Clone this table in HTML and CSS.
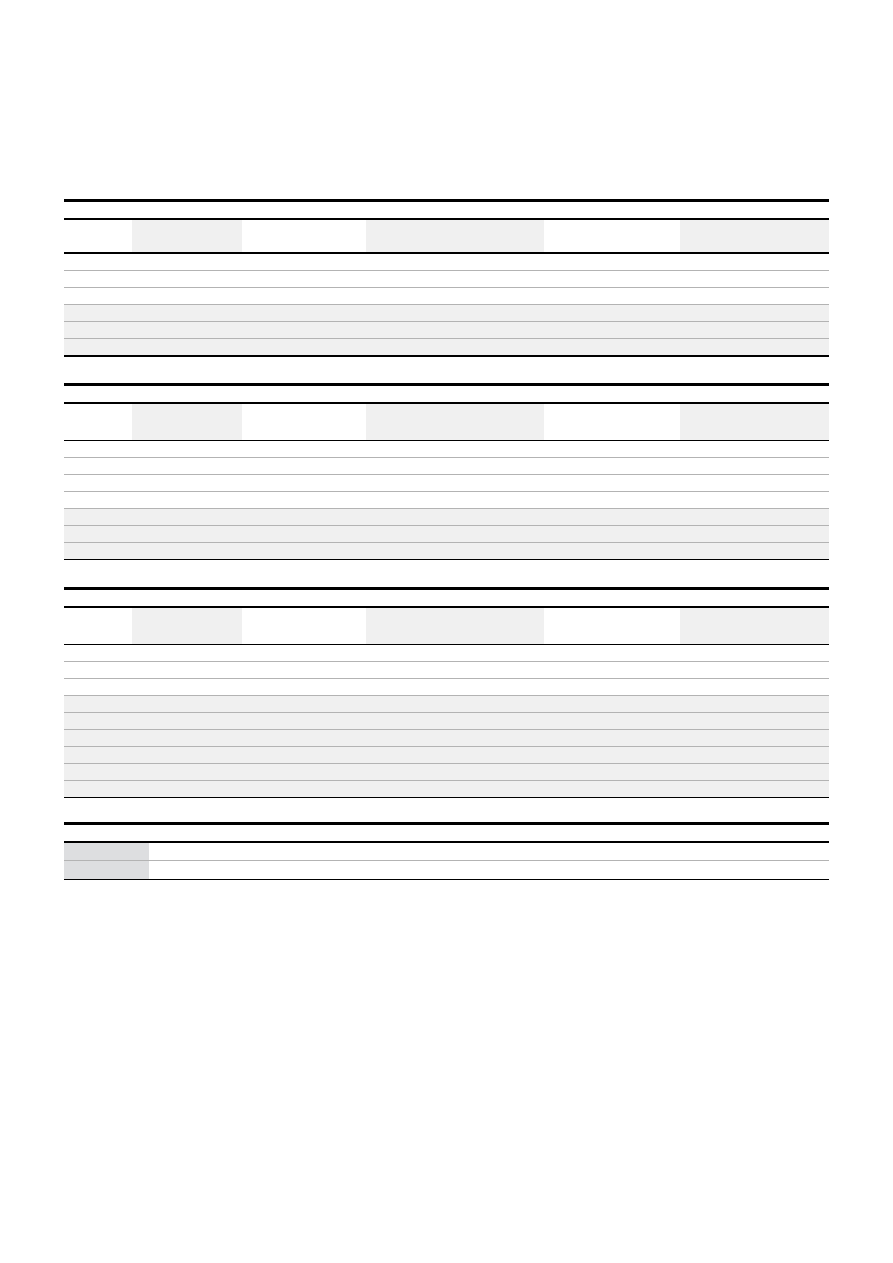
FILE: index.html
```html
<!DOCTYPE html>
<html lang="en">
<head>
<meta charset="utf-8">
<title>Tables</title>
<link rel="stylesheet" href="styles.css">
</head>
<body>
<main class="page">
  <section class="block">
    <div class="caption"></div>
    <div class="tbl tbl-first">
      <div class="head head-short">
        <div class="cell"></div><div class="cell shade"></div><div class="cell"></div>
        <div class="cell shade"></div><div class="cell"></div><div class="cell shade"></div>
      </div>
      <div class="row"></div>
      <div class="row"></div>
      <div class="row"></div>
      <div class="row shade"></div>
      <div class="row shade"></div>
      <div class="row shade"></div>
    </div>
  </section>

  <section class="block gap-b">
    <div class="caption"></div>
    <div class="tbl">
      <div class="head">
        <div class="cell"></div><div class="cell shade"></div><div class="cell"></div>
        <div class="cell shade"></div><div class="cell"></div><div class="cell shade"></div>
      </div>
      <div class="row"></div>
      <div class="row"></div>
      <div class="row"></div>
      <div class="row"></div>
      <div class="row shade"></div>
      <div class="row shade"></div>
      <div class="row shade"></div>
    </div>
  </section>

  <section class="block gap-c">
    <div class="caption"></div>
    <div class="tbl">
      <div class="head">
        <div class="cell"></div><div class="cell shade"></div><div class="cell"></div>
        <div class="cell shade"></div><div class="cell"></div><div class="cell shade"></div>
      </div>
      <div class="row"></div>
      <div class="row"></div>
      <div class="row"></div>
      <div class="row shade"></div>
      <div class="row shade"></div>
      <div class="row shade"></div>
      <div class="row shade"></div>
      <div class="row shade"></div>
      <div class="row shade"></div>
    </div>
  </section>

  <section class="block gap-d">
    <div class="caption"></div>
    <div class="tbl">
      <div class="kv kv-first">
        <div class="label"></div><div class="value"></div>
      </div>
      <div class="kv kv-last">
        <div class="label"></div><div class="value"></div>
      </div>
    </div>
  </section>
</main>
</body>
</html>
```

FILE: styles.css
```css
body {
  margin: 0;
  background: #ffffff;
  font-family: "Liberation Sans", Arial, sans-serif;
}

.page {
  padding: 199px 0 0 64px;
  width: 765px;
}

.block {
  border-top: 3px solid #000000;
}

.gap-b {
  margin-top: 26px;
}

.gap-c {
  margin-top: 27px;
}

.gap-d {
  margin-top: 24px;
}

.caption {
  height: 16px;
}

.tbl {
  border-top: 2px solid #000000;
  border-bottom: 1px solid #000000;
}

.tbl-first {
  border-bottom-width: 2px;
}

.head {
  display: grid;
  grid-template-columns: 68px 110px 124px 178px 136px 149px;
  height: 36px;
  border-bottom: 1px solid #000000;
}

.head-short {
  height: 32px;
  border-bottom-width: 2px;
}

.cell.shade {
  background: #f0f0f0;
}

.row {
  height: 16px;
  border-bottom: 1px solid #b3b3b3;
}

.row:last-child {
  border-bottom: none;
}

.row.shade {
  background: #f0f0f0;
}

.kv {
  display: grid;
  grid-template-columns: 85px 1fr;
}

.kv-first {
  height: 17px;
  border-bottom: 1px solid #b3b3b3;
}

.kv-last {
  height: 18px;
}

.label {
  background: #dddee0;
}
```
